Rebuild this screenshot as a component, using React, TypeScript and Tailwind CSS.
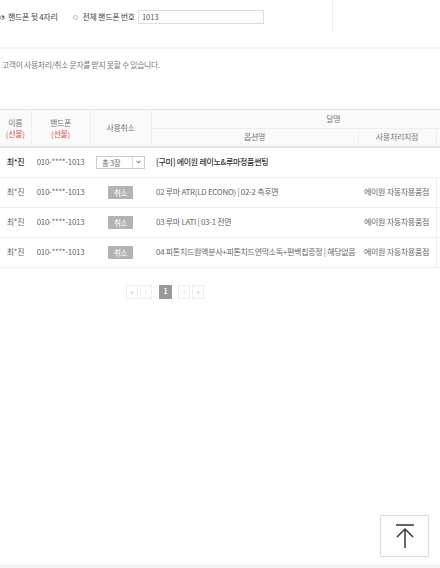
import React from "react";

const font = { fontFamily: '"Noto Sans CJK KR", "Noto Sans", sans-serif' };

const rows = [
  { opt: "02 루마 ATR(LD ECONO) | 02-2 측후면", branch: "에이원 자동차용품점" },
  { opt: "03 루마 LATI | 03-1 전면", branch: "에이원 자동차용품점" },
  { opt: "04 피톤치드원액분사+피톤치드연막소독+편백칩증정 | 해당없음", branch: "에이원 자동차용품점" },
];

export default function App() {
  return (
    <div className="relative w-[440px] h-[568px] overflow-hidden bg-white text-[#555]" style={font}>
      {/* top search area */}
      <div className="h-[49px] border-b-2 border-[#f2f2f2]">
        <div className="w-[333px] h-[32px] border-r border-[#eeeeee] pt-[10px]">
          <div className="flex items-center text-[8px] text-[#444] tracking-[-0.3px]">
            <span className="w-[5px] h-[5px] rounded-full border border-[#999] flex items-center justify-center">
              <span className="w-[2px] h-[2px] rounded-full bg-[#555]" />
            </span>
            <span className="ml-[3px]">핸드폰 뒷 4자리</span>
            <span className="ml-[16px] w-[5px] h-[5px] rounded-full border border-[#bbb]" />
            <span className="ml-[4px]">전체 핸드폰 번호</span>
            <div className="ml-[3px] w-[126px] h-[14px] border border-[#ddd] text-[7.5px] text-[#555] pl-[3px] leading-[12px] tracking-normal">1013</div>
          </div>
        </div>
      </div>

      <div className="pt-[10px] pl-[2px] text-[7.8px] text-[#777] tracking-[-0.3px]">고객이 사용처리/취소 문자를 받지 못할 수 있습니다.</div>

      {/* table */}
      <div className="mt-[38px] w-[440px] overflow-hidden">
        <table className="w-[515px] table-fixed border-collapse text-[8px] tracking-[-0.3px]">
          <colgroup>
            <col className="w-[31px]" />
            <col className="w-[59px]" />
            <col className="w-[61px]" />
            <col className="w-[207px]" />
            <col className="w-[78px]" />
            <col className="w-[79px]" />
          </colgroup>
          <thead className="bg-[#fafafa] text-[#777]">
            <tr className="h-[19px] border-t border-[#e2e2e2]">
              <th rowSpan={2} className="font-normal border-r border-[#eee] leading-[11px] border-b-2 border-b-[#e4e4e4]">
                이름
                <br />
                <span className="text-[#d9534f]">(선불)</span>
              </th>
              <th rowSpan={2} className="font-normal border-r border-[#eee] leading-[11px] border-b-2 border-b-[#e4e4e4]">
                핸드폰
                <br />
                <span className="text-[#d9534f]">(선불)</span>
              </th>
              <th rowSpan={2} className="font-normal border-r border-[#eee] border-b-2 border-b-[#e4e4e4]">사용취소</th>
              <th colSpan={3} className="font-normal border-b border-[#eee]">달명</th>
            </tr>
            <tr className="h-[19px]">
              <th className="font-normal border-r border-[#eee] border-b-2 border-b-[#e4e4e4]">옵션명</th>
              <th className="font-normal border-r border-[#eee] border-b-2 border-b-[#e4e4e4]">사용처리지점</th>
              <th className="font-normal border-b-2 border-b-[#e4e4e4]"></th>
            </tr>
          </thead>
          <tbody>
            <tr className="h-[30px] border-b border-[#eee]">
              <td className="text-center text-[#333] font-medium">최*진</td>
              <td className="text-center text-[#666]">010-****-1013</td>
              <td className="px-[6px]">
                <div className="flex h-[13px] w-[49px] border border-[#ccc] text-[7.5px] text-[#666]">
                  <span className="flex-1 pl-[5px] leading-[11px]">총 3장</span>
                  <span className="w-[12px] border-l border-[#ddd] flex items-center justify-center">
                    <svg width="5" height="4" viewBox="0 0 5 4"><path d="M0.5 0.8 L2.5 3 L4.5 0.8" stroke="#555" strokeWidth="1" fill="none" /></svg>
                  </span>
                </div>
              </td>
              <td colSpan={3} className="pl-[5px] text-[#333] font-medium">[구미] 에이원 레이노&amp;루마정품썬팅</td>
            </tr>
            {rows.map((r, i) => (
              <tr key={i} className="h-[30px] border-b border-[#eee]">
                <td className="text-center text-[#666]">최*진</td>
                <td className="text-center text-[#666]">010-****-1013</td>
                <td>
                  <div className="mx-auto w-[25px] h-[13px] bg-[#b3b3b3] text-white text-[7.5px] leading-[13px] text-center">취소</div>
                </td>
                <td className="pl-[5px] whitespace-nowrap text-[#666]">{r.opt}</td>
                <td className="pl-[6px] border-r border-[#eee] whitespace-nowrap text-[#666]">{r.branch}</td>
                <td></td>
              </tr>
            ))}
          </tbody>
        </table>
      </div>

      {/* pagination */}
      <div className="mt-[17px] ml-[126px] flex items-center text-[7px] text-[#bbb]">
        <span className="w-[12px] h-[14px] border border-[#eee] flex items-center justify-center">«</span>
        <span className="ml-[2px] w-[12px] h-[14px] border border-[#eee] flex items-center justify-center">‹</span>
        <span className="ml-[7px] w-[13px] h-[14px] bg-[#999] text-white font-bold flex items-center justify-center">1</span>
        <span className="ml-[6px] w-[12px] h-[14px] border border-[#eee] flex items-center justify-center">›</span>
        <span className="ml-[2px] w-[12px] h-[14px] border border-[#eee] flex items-center justify-center">»</span>
      </div>

      {/* top button */}
      <div className="absolute left-[380px] top-[515px] w-[49px] h-[42px] border border-[#ddd] bg-white flex items-center justify-center">
        <svg width="22" height="26" viewBox="0 0 22 26" fill="none" stroke="#333" strokeWidth="1.5">
          <path d="M2 2 H20" />
          <path d="M11 6 V25" />
          <path d="M3 14 L11 6 L19 14" />
        </svg>
      </div>
      <div className="absolute left-0 bottom-0 w-[440px] h-[4px] bg-[#f4f4f4]" />
    </div>
  );
}
